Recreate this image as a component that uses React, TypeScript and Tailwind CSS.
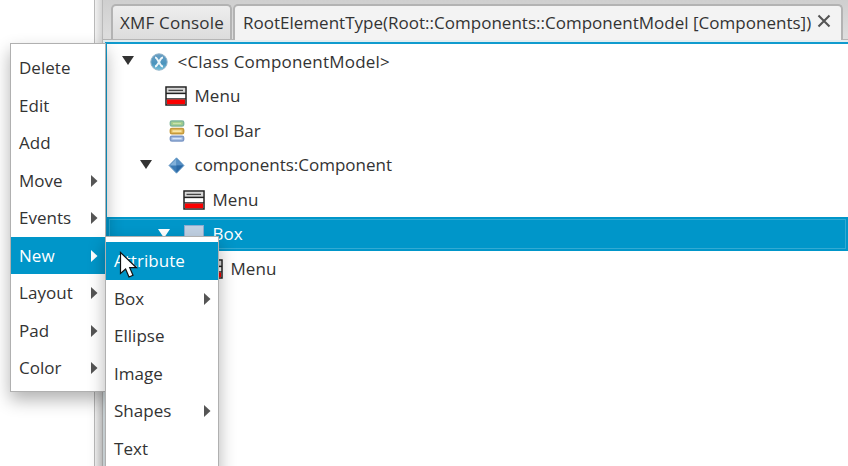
import type { ReactNode } from "react";

function MenuGlyph() {
  return (
    <svg width="22" height="20" viewBox="0 0 22 20" className="block">
      <rect x="1" y="1" width="20" height="18" fill="#fff" stroke="#222" strokeWidth="1.5" />
      <rect x="2" y="2" width="18" height="5" fill="#d8d8d8" />
      <path d="M3.5 4.4H18" stroke="#444" strokeWidth="1.3" />
      <path d="M1 7.4H21" stroke="#222" strokeWidth="1.5" />
      <rect x="2" y="13.3" width="18" height="4.9" fill="#fb0000" />
      <path d="M1 12.8H21" stroke="#222" strokeWidth="1.1" />
    </svg>
  );
}

function ClassGlyph() {
  return (
    <svg width="18" height="18" viewBox="0 0 18 18" className="block">
      <defs>
        <linearGradient id="classFill" x1="0" y1="0" x2="0" y2="1">
          <stop offset="0" stopColor="#6a9fc4" />
          <stop offset="0.6" stopColor="#4b94bd" />
          <stop offset="1" stopColor="#78c4dc" />
        </linearGradient>
      </defs>
      <circle cx="9" cy="9" r="8.2" fill="url(#classFill)" stroke="#91b3c9" strokeWidth="1" />
      <path d="M5 4.5C7.5 4.5 7 7 9 9C10.5 11.5 10.5 13.5 13 13.5M13 4.5C10.5 4.5 10.5 7 9 9C7.5 11.5 7 13.5 5 13.5" stroke="#edf6fa" strokeWidth="2" fill="none" />
    </svg>
  );
}

function ToolBarGlyph() {
  return (
    <svg width="16" height="22" viewBox="0 0 16 22" className="block">
      <rect x="1.4" y="1" width="13.2" height="5" rx="1.5" fill="#a5cf8c" stroke="#7fb69b" strokeWidth="1.6" />
      <path d="M4 3.5H12" stroke="#c9e3ae" strokeWidth="1.2" />
      <rect x="1.4" y="8.5" width="13.2" height="5.2" rx="1.5" fill="#e3bd62" stroke="#c59a3d" strokeWidth="1.6" />
      <path d="M3.5 11.1H12.5" stroke="#fff0b7" strokeWidth="1.4" />
      <rect x="1.4" y="16.2" width="13.2" height="4.8" rx="1.5" fill="#a3bce2" stroke="#7c98c6" strokeWidth="1.6" />
      <path d="M3.5 18.6H12.5" stroke="#d6e5f9" strokeWidth="1.2" />
    </svg>
  );
}

function DiamondGlyph() {
  return (
    <svg width="17" height="17" viewBox="0 0 17 17" className="block">
      <path d="M8.5 .8L16 8.5L8.5 16.2L1 8.5Z" fill="#3b7bb5" stroke="#76a3ca" strokeWidth="1" strokeLinejoin="round" />
      <path d="M8.5 1.5V8.5H1.8Z" fill="#82b1da" />
      <path d="M8.5 1.5V8.5H15.2Z" fill="#5690c5" />
      <path d="M8.5 15.5V8.5H15.2Z" fill="#2a69a5" />
    </svg>
  );
}

function BoxGlyph() {
  return <div className="h-5 w-5 border border-[#8cabd0] bg-[#c0d0e2]" />;
}

function Disclosure({ light = false }: { light?: boolean }) {
  return (
    <svg width="12" height="9" viewBox="0 0 12 9" className={light ? "block text-white" : "block text-[#333]"}>
      <path d="M0 0H12L6 9Z" fill="currentColor" />
    </svg>
  );
}

function TreeRow({ indent, glyph, gap, label, tracking = "tracking-[0.05px]", open = false, selected = false }: {
  indent: string; glyph: ReactNode; gap: string; label: string; tracking?: string; open?: boolean; selected?: boolean;
}) {
  return (
    <div className={`flex h-[34.55px] items-center ${selected ? "border-y border-[#0096c9] bg-[#0096c9] text-white outline-1 -outline-offset-[3px] outline-[#32aad3]" : ""}`}>
      <div className={`flex shrink-0 items-center ${indent}`}>
        <span className="flex w-3 pb-px">{open && <Disclosure light={selected} />}</span>
      </div>
      <div className="flex w-[22px] shrink-0 justify-center pt-px">{glyph}</div>
      <span className={`${selected ? "" : "pt-px"} ${gap} ${tracking}`}>{label}</span>
    </div>
  );
}

function MenuItem({ label, arrow = false, active = false }: { label: string; arrow?: boolean; active?: boolean }) {
  return (
    <div className={`flex h-[37.5px] items-center justify-between pt-px pr-[7px] pl-2 ${active ? "bg-[#0096c9] text-white" : "text-[#333]"}`}>
      <span className="tracking-[0.03px]">{label}</span>
      {arrow && (
        <svg width="7" height="12" viewBox="0 0 7 12" className={active ? "text-white" : "text-[#555]"}>
          <path d="M0 0L6.5 6L0 12Z" fill="currentColor" />
        </svg>
      )}
    </div>
  );
}

export default function App() {
  return (
    <div className="relative flex h-[466px] w-[848px] overflow-hidden bg-white font-['Open_Sans','Noto_Sans',sans-serif] text-[17px] leading-6 whitespace-nowrap text-[#333]">
      <div className="w-[94px] shrink-0" />
      <div className="w-[9px] shrink-0 border-x border-[#b9b9b9] bg-linear-to-r from-[#f0f0f0] to-[#d4d4d4]" />
      <main className="flex min-w-0 grow flex-col bg-[#e3edf0]">
        <header className="flex h-10 shrink-0 items-end gap-px border-b border-[#b5b5b5] bg-linear-to-b from-[#cfcfcf] to-[#dedede] pl-2">
          <div className="flex h-[35px] w-[121px] items-center rounded-t-[5px] border-2 border-b-0 border-[#b3b3b3] bg-linear-to-b from-[#eeeeee] to-[#dcdcdc] pl-[7px]">
            <span className="tracking-[0.2px]">XMF Console</span>
          </div>
          <div className="-mb-px flex h-9 w-[610px] items-center rounded-t-[5px] border-2 border-b-0 border-[#b3b3b3] bg-[#f3f3f3] pb-px pl-2">
            <span className="w-[571px] tracking-[0.01px]">RootElementType(Root::Components::ComponentModel [Components])</span>
            <svg width="14" height="14" viewBox="0 0 14 14" className="-mt-[3px] ml-[3px]">
              <path d="M1.5 1.5L12.5 12.5M12.5 1.5L1.5 12.5" stroke="#555" strokeWidth="2.1" />
            </svg>
          </div>
        </header>
        <section className="mt-[2px] ml-[2px] grow border-t-2 border-l-2 border-[#109bce] bg-white">
          <TreeRow open indent="w-[41px] pl-[15px]" glyph={<ClassGlyph />} gap="ml-[7.5px]" label="<Class ComponentModel>" tracking="tracking-[0.2px]" />
          <TreeRow indent="w-[58px]" glyph={<MenuGlyph />} gap="ml-[7.5px]" label="Menu" />
          <TreeRow indent="w-[59px]" glyph={<ToolBarGlyph />} gap="ml-[6.5px]" label="Tool Bar" />
          <TreeRow open indent="w-[58px] pl-[33px]" glyph={<DiamondGlyph />} gap="ml-[7.5px]" label="components:Component" tracking="tracking-[0px]" />
          <TreeRow indent="w-[76px]" glyph={<MenuGlyph />} gap="ml-[7.5px]" label="Menu" />
          <TreeRow open selected indent="w-[76px] pl-[51px]" glyph={<BoxGlyph />} gap="ml-[7.5px]" label="Box" />
          <TreeRow indent="w-[94px]" glyph={<MenuGlyph />} gap="ml-[7.5px]" label="Menu" />
        </section>
      </main>

      <nav className="absolute top-[43px] left-[10px] h-[349px] w-[96px] border border-[#b0b0b0] bg-white pt-[5px] shadow-[0_8px_16px_rgba(0,0,0,0.3)]">
        <MenuItem label="Delete" />
        <MenuItem label="Edit" />
        <MenuItem label="Add" />
        <MenuItem label="Move" arrow />
        <MenuItem label="Events" arrow />
        <MenuItem label="New" arrow active />
        <MenuItem label="Layout" arrow />
        <MenuItem label="Pad" arrow />
        <MenuItem label="Color" arrow />
      </nav>

      <nav className="absolute top-[236px] left-[105px] h-[260px] w-[114px] border border-[#b0b0b0] bg-white pt-[5px] shadow-[0_8px_16px_rgba(0,0,0,0.3)]">
        <MenuItem label="Attribute" active />
        <MenuItem label="Box" arrow />
        <MenuItem label="Ellipse" />
        <MenuItem label="Image" />
        <MenuItem label="Shapes" arrow />
        <MenuItem label="Text" />
      </nav>

      <svg width="20" height="28" viewBox="0 0 20 28" className="absolute top-[251px] left-[119px]">
        <path d="M1.5 1.5V22.5L6.6 18L10 26L14 24.3L10.7 16.7H17.5Z" fill="#fff" stroke="#111" strokeWidth="1.2" />
      </svg>
    </div>
  );
}
